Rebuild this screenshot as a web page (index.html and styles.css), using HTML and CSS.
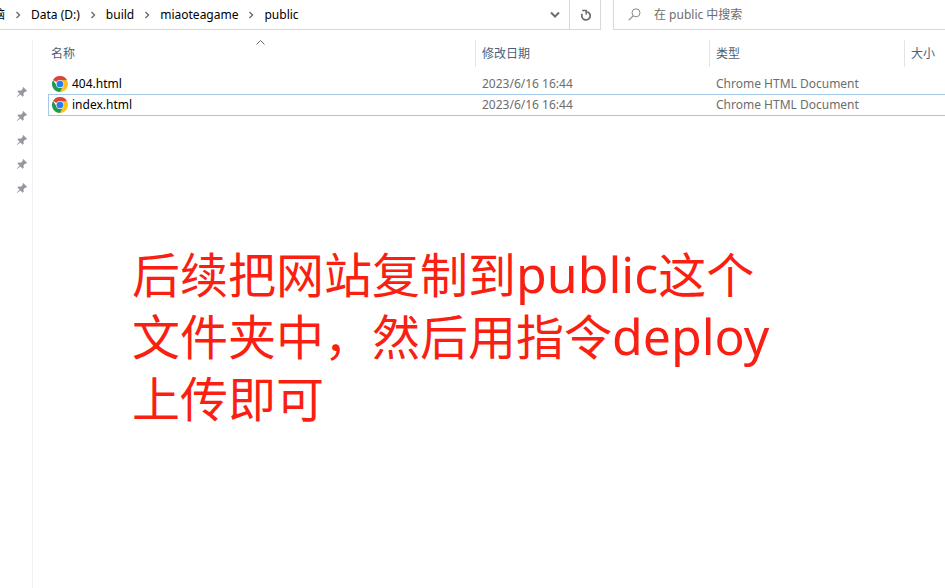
FILE: index.html
```html
<!DOCTYPE html>
<html lang="zh-CN">
<head>
<meta charset="utf-8">
<title>public</title>
<link rel="stylesheet" href="styles.css">
</head>
<body>
<svg class="defs" aria-hidden="true">
  <symbol id="sep" viewBox="0 0 6 8"><path d="M1.500 1l3 3-3 3" fill="none" stroke="#6b6b6b" stroke-width="1.400"/></symbol>
  <symbol id="pin" viewBox="0 0 12 12"><path d="M7.200 1l4 4-1 .6-.8-.2-1.900 1.900.2 2.400-1 1L4.400 8.400 1.200 11 .8 10.700 3.600 7.600 1.400 5.400l1-1 2.500.3L6.800 2.800 6.600 1.700z" fill="#94989e"/></symbol>
  <symbol id="chrome" viewBox="0 0 48 48">
    <path d="M24 24L3.200 12A24 24 0 0 1 44.800 12z" fill="#dc4437"/>
    <path d="M24 13H45.300A24 24 0 0 1 24 48L33.500 29.500z" fill="#fcc31e"/>
    <path d="M3.200 12L14.500 29.500 24 35H31L24 48A24 24 0 0 1 3.200 12z" fill="#209a4c"/>
    <circle cx="24" cy="24" r="12" fill="#dbe9f8"/>
    <circle cx="24" cy="24" r="10" fill="#2b7de9"/>
  </symbol>
</svg>
<header class="toolbar">
  <nav class="address" aria-label="路径">
    <a class="crumb crumb-first" href="#">脑</a>
    <svg class="sep"><use href="#sep"/></svg>
    <a class="crumb" href="#">Data (D:)</a>
    <svg class="sep"><use href="#sep"/></svg>
    <a class="crumb" href="#">build</a>
    <svg class="sep"><use href="#sep"/></svg>
    <a class="crumb" href="#">miaoteagame</a>
    <svg class="sep"><use href="#sep"/></svg>
    <a class="crumb" href="#">public</a>
    <button class="history" type="button" aria-label="历史记录"><svg width="10" height="8" viewBox="0 0 10 8"><path d="M1 1.500l4 4 4-4" fill="none" stroke="#707070" stroke-width="2"/></svg></button>
  </nav>
  <button class="refresh" type="button" aria-label="刷新"><svg width="12" height="12" viewBox="0 0 12 12"><path d="M2.200 4.900A4.200 4.200 0 1 0 7.200 2.700" fill="none" stroke="#6b6b6b" stroke-width="1.700"/><path d="M2.200 1.500H6.200V5.500" fill="none" stroke="#6b6b6b" stroke-width="1.500"/></svg></button>
  <label class="search">
    <svg width="13" height="13" viewBox="0 0 13 13"><path d="M5.200 7.800L.8 12.200" stroke="#888" stroke-width="1.200"/><circle cx="8" cy="4.800" r="4" fill="none" stroke="#888"/></svg>
    <input type="text" placeholder="在 public 中搜索" aria-label="在 public 中搜索">
  </label>
</header>
<div class="body">
  <aside class="sidebar">
    <svg class="pin"><use href="#pin"/></svg>
    <svg class="pin"><use href="#pin"/></svg>
    <svg class="pin"><use href="#pin"/></svg>
    <svg class="pin"><use href="#pin"/></svg>
    <svg class="pin"><use href="#pin"/></svg>
  </aside>
  <main class="content">
    <table class="files">
      <colgroup><col class="col-name"><col class="col-date"><col class="col-type"><col></colgroup>
      <thead>
        <tr>
          <th>名称<svg class="sort" width="9" height="5" viewBox="0 0 9 5"><path d="M.5 4.500l4-4 4 4" fill="none" stroke="#666"/></svg></th>
          <th>修改日期</th><th>类型</th><th>大小</th>
        </tr>
      </thead>
      <tbody>
        <tr><td><span class="file"><svg class="icon"><use href="#chrome"/></svg>404.html</span></td><td>2023/6/16 16:44</td><td>Chrome HTML Document</td><td></td></tr>
        <tr class="focused"><td><span class="file"><svg class="icon"><use href="#chrome"/></svg>index.html</span></td><td>2023/6/16 16:44</td><td>Chrome HTML Document</td><td></td></tr>
      </tbody>
    </table>
    <p class="note">后续把网站复制到<span class="latin">public</span>这个<br>文件夹中，然后用指令<span class="latin">deploy</span><br>上传即可</p>
  </main>
</div>
</body>
</html>
```
FILE: styles.css
```css
* { box-sizing: border-box; }
body {
  margin: 0;
  min-height: 100vh;
  display: flex;
  flex-direction: column;
  overflow-x: hidden;
  background: #fff;
  color: #000;
  font: 12px/20px "Noto Sans", "Noto Sans CJK SC", sans-serif;
}
button { border: 0; padding: 0; background: none; display: flex; align-items: center; justify-content: center; }
svg { flex: none; }
.defs { position: absolute; width: 0; height: 0; }

.toolbar { display: flex; height: 30px; }
.address {
  flex: 0 0 570px;
  display: flex;
  align-items: center;
  border: solid #d9d9d9;
  border-width: 0 1px 1px 0;
  overflow: hidden;
}
.crumb { color: #000; text-decoration: none; white-space: nowrap; }
.crumb-first { width: 5px; display: flex; justify-content: flex-end; }
.sep { width: 6px; height: 8px; margin: 0 10px; }
.history { width: 28px; height: 28px; margin-left: auto; }
.refresh { width: 31px; padding-left: 2px; border: solid #d9d9d9; border-width: 0 1px 1px 0; }
.search {
  flex: 1;
  display: flex;
  align-items: center;
  gap: 13px;
  margin-left: 12px;
  padding-left: 14px;
  border: solid #d9d9d9;
  border-width: 0 0 1px 1px;
}
.search input { flex: 1; min-width: 0; border: 0; padding: 0; outline: 0; background: none; font: inherit; }
.search input::placeholder { color: #6d6d6d; opacity: 1; }

.body { flex: 1; display: flex; padding-top: 10px; }
.sidebar {
  flex: 0 0 33px;
  display: flex;
  flex-direction: column;
  align-items: flex-end;
  gap: 12px;
  padding: 46px 4px 0 0;
  border-right: 1px solid #f0f0f0;
}
.pin { width: 12px; height: 12px; }
.content { flex: 1; min-width: 0; padding-left: 15px; }

.files { width: 100%; table-layout: fixed; border-collapse: separate; border-spacing: 0; }
.col-name { width: 427px; }
.col-date { width: 234px; }
.col-type { width: 195px; }
.files th {
  position: relative;
  height: 27px;
  padding: 0 0 0 6px;
  border-left: 1px solid #e3e3e3;
  color: #4c607a;
  font-weight: 400;
  text-align: left;
}
.files th:first-child { border-left: 0; padding-left: 3px; }
.sort { position: absolute; top: 0; left: calc(50% - 6px); }
.files tbody::before { content: ""; display: block; height: 6px; }
.files td {
  height: 21px;
  padding: 0 0 0 7px;
  color: #6d6d6d;
  line-height: 19px;
  white-space: nowrap;
}
.files td:first-child { padding-left: 4px; color: #000; }
.file { display: flex; align-items: center; gap: 4px; }
.icon { width: 16px; height: 16px; }
.focused td { height: 22px; padding-bottom: 1px; border: solid #a3c8e8; border-width: 1px 0; }
.focused td:first-child { border-left-width: 1px; padding-left: 3px; }

.note { margin: 128px 0 0 84px; color: #f91f12; font-size: 48px; line-height: 62px; }
.latin { font-size: 50px; line-height: 1; }
```
